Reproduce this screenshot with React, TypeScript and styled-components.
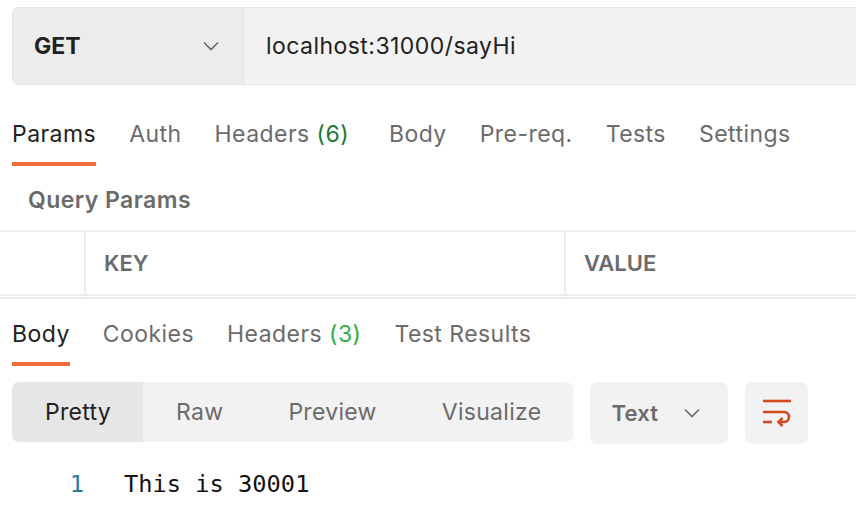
import React from "react";
import styled, { createGlobalStyle } from "styled-components";

const Global = createGlobalStyle`
  html, body { margin: 0; padding: 0; background: #ffffff; }
  body { font-family: Inter, "Noto Sans", sans-serif; color: #212121; overflow: hidden; }
  * { box-sizing: border-box; }
`;

const Page = styled.div`
  width: 856px;
  height: 516px;
  overflow: hidden;
  display: flex;
  flex-direction: column;
`;

const UrlBar = styled.div`
  margin: 7px 0 0 12px;
  width: 900px;
  height: 78px;
  display: flex;
  border: 1px solid #e6e6e6;
  border-radius: 6px 0 0 6px;
  overflow: hidden;
  background: #f2f2f2;
`;

const Method = styled.div`
  width: 231px;
  flex: none;
  display: flex;
  align-items: center;
  justify-content: space-between;
  padding: 0 24px 0 21px;
  background: #ececec;
  border-right: 1px solid #e2e2e2;
  font-weight: 700;
  font-size: 23px;
  color: #212121;
`;

const UrlText = styled.div`
  display: flex;
  align-items: center;
  padding-left: 22px;
  font-size: 23px;
  letter-spacing: 0.45px;
  color: #212121;
`;

const TabBar = styled.div<{ $pt: number }>`
  display: flex;
  gap: 33px;
  padding: ${(p) => p.$pt}px 0 0 12px;
`;

const Tab = styled.div<{ $active?: boolean }>`
  font-size: 23px;
  letter-spacing: 0.45px;
  line-height: 28px;
  padding-bottom: 14px;
  border-bottom: 4px solid ${(p) => (p.$active ? "#f26b3a" : "transparent")};
  color: ${(p) => (p.$active ? "#212121" : "#6b6b6b")};
  white-space: pre;
`;

const Count = styled.span<{ $color: string }>`
  color: ${(p) => p.$color};
`;

const SectionTitle = styled.div`
  margin: 20px 0 0 28px;
  font-size: 23px;
  letter-spacing: 0.45px;
  line-height: 28px;
  font-weight: 600;
  color: #6b6b6b;
`;

const Table = styled.div`
  margin-top: 16px;
  border-top: 2px solid #ececec;
`;

const Row = styled.div<{ $h: number }>`
  display: grid;
  grid-template-columns: 84px 480px 1fr;
  height: ${(p) => p.$h}px;
  border-bottom: 2px solid #ececec;
`;

const Cell = styled.div`
  display: flex;
  align-items: center;
  padding-left: 18px;
  border-left: 2px solid #ececec;
  font-size: 22px;
  font-weight: 600;
  color: #6b6b6b;
  &:first-child { border-left: none; }
`;

const Toolbar = styled.div`
  display: flex;
  align-items: flex-start;
  margin: 16px 0 0 12px;
  gap: 17px;
`;

const Segmented = styled.div`
  display: flex;
  height: 60px;
  border-radius: 7px;
  overflow: hidden;
  background: #f2f2f2;
`;

const Segment = styled.div<{ $active?: boolean }>`
  display: flex;
  align-items: center;
  padding: 0 32px 0 33px;
  font-size: 23px;
  letter-spacing: 0.3px;
  background: ${(p) => (p.$active ? "#e6e6e6" : "transparent")};
  color: ${(p) => (p.$active ? "#212121" : "#6b6b6b")};
`;

const Dropdown = styled.div`
  width: 138px;
  height: 62px;
  border-radius: 7px;
  background: #f2f2f2;
  display: flex;
  align-items: center;
  justify-content: space-between;
  padding: 0 28px 0 21px;
  font-size: 22px;
  letter-spacing: 0.2px;
  font-weight: 600;
  color: #6b6b6b;
`;

const IconButton = styled.div`
  width: 63px;
  height: 62px;
  border-radius: 7px;
  background: #f2f2f2;
  display: flex;
  align-items: center;
  justify-content: center;
`;

const CodeLine = styled.div`
  margin-top: 25px;
  display: flex;
  font-family: "DejaVu Sans Mono", monospace;
  font-size: 23.7px;
  line-height: 30px;
`;

const LineNo = styled.div`
  width: 84px;
  text-align: right;
  color: #2a7a9c;
`;

const Code = styled.div`
  margin-left: 40px;
  color: #111111;
`;

const Chevron = () => (
  <svg width="16" height="10" viewBox="0 0 16 10">
    <polyline points="1,1.5 8,8.5 15,1.5" fill="none" stroke="#6b6b6b" strokeWidth="1.6" />
  </svg>
);

const WrapIcon = () => (
  <svg width="30" height="30" viewBox="0 0 30 30">
    <g fill="none" stroke="#d24a1e" strokeWidth="2.6" strokeLinecap="butt">
      <path d="M1 3 H29" />
      <path d="M1 14 H22 A5 5 0 0 1 22 24 H17" />
      <path d="M1 24 H10" />
      <path d="M20.5 20 L16.5 24 L20.5 28" strokeLinejoin="miter" />
    </g>
  </svg>
);

export default function App() {
  return (
    <Page>
      <Global />
      <UrlBar>
        <Method>
          GET
          <Chevron />
        </Method>
        <UrlText>localhost:31000/sayHi</UrlText>
      </UrlBar>

      <TabBar $pt={35}>
        <Tab $active>Params</Tab>
        <Tab>Auth</Tab>
        <Tab>
          Headers <Count $color="#1c7a3c">(6)</Count>{" "}
        </Tab>
        <Tab>Body</Tab>
        <Tab>Pre-req.</Tab>
        <Tab>Tests</Tab>
        <Tab>Settings</Tab>
      </TabBar>

      <SectionTitle>Query Params</SectionTitle>

      <Table>
        <Row $h={64}>
          <Cell />
          <Cell>KEY</Cell>
          <Cell>VALUE</Cell>
        </Row>
        <Row $h={3}>
          <Cell />
          <Cell />
          <Cell />
        </Row>
      </Table>

      <TabBar $pt={21}>
        <Tab $active>Body</Tab>
        <Tab>Cookies</Tab>
        <Tab>
          Headers <Count $color="#2fae4a">(3)</Count>
        </Tab>
        <Tab>Test Results</Tab>
      </TabBar>

      <Toolbar>
        <Segmented>
          <Segment $active>Pretty</Segment>
          <Segment>Raw</Segment>
          <Segment>Preview</Segment>
          <Segment>Visualize</Segment>
        </Segmented>
        <Dropdown>
          Text
          <Chevron />
        </Dropdown>
        <IconButton>
          <WrapIcon />
        </IconButton>
      </Toolbar>

      <CodeLine>
        <LineNo>1</LineNo>
        <Code>This is 30001</Code>
      </CodeLine>
    </Page>
  );
}
